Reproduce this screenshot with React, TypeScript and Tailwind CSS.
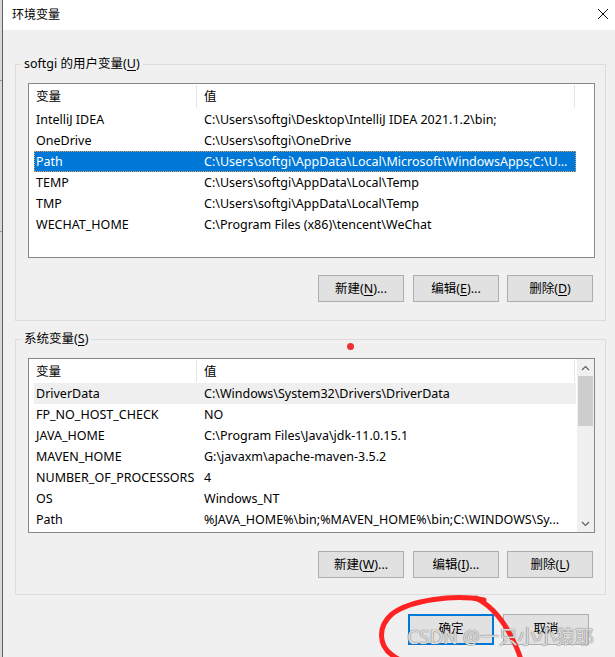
import React from "react";

const FONT = { fontFamily: "'Noto Sans', 'Noto Sans CJK SC', sans-serif" };

type Row = { name: string; value: string };

const userRows: Row[] = [
  { name: "IntelliJ IDEA", value: "C:\\Users\\softgi\\Desktop\\IntelliJ IDEA 2021.1.2\\bin;" },
  { name: "OneDrive", value: "C:\\Users\\softgi\\OneDrive" },
  { name: "Path", value: "C:\\Users\\softgi\\AppData\\Local\\Microsoft\\WindowsApps;C:\\U..." },
  { name: "TEMP", value: "C:\\Users\\softgi\\AppData\\Local\\Temp" },
  { name: "TMP", value: "C:\\Users\\softgi\\AppData\\Local\\Temp" },
  { name: "WECHAT_HOME", value: "C:\\Program Files (x86)\\tencent\\WeChat" },
];

const sysRows: Row[] = [
  { name: "DriverData", value: "C:\\Windows\\System32\\Drivers\\DriverData" },
  { name: "FP_NO_HOST_CHECK", value: "NO" },
  { name: "JAVA_HOME", value: "C:\\Program Files\\Java\\jdk-11.0.15.1" },
  { name: "MAVEN_HOME", value: "G:\\javaxm\\apache-maven-3.5.2" },
  { name: "NUMBER_OF_PROCESSORS", value: "4" },
  { name: "OS", value: "Windows_NT" },
  { name: "Path", value: "%JAVA_HOME%\\bin;%MAVEN_HOME%\\bin;C:\\WINDOWS\\Sy..." },
];

function Btn({ pre, key_, post, className = "" }: { pre: string; key_?: string; post?: string; className?: string }) {
  return (
    <div
      className={`w-[86px] h-[27px] flex items-center justify-center pt-px bg-[#e1e1e1] border border-[#adadad] text-[12.5px] text-black ${className}`}
    >
      <span>
        {pre}
        {key_ !== undefined && (
          <>
            (<span className="underline underline-offset-2">{key_}</span>){post}
          </>
        )}
      </span>
    </div>
  );
}

function Header({ h, full }: { h: string; full: boolean }) {
  return (
    <div className={`flex items-center ${h} bg-white text-[12.5px]`}>
      <div className="w-[168px] ml-[5px] pl-[2px] pt-[2px] relative h-full flex items-center">
        变量
        <div className="absolute right-[5px] top-[1px] bottom-[1px] w-px bg-[#e5e5e5]" />
      </div>
      <div className="w-[373px] pl-[2px] pt-[2px] relative h-full flex items-center">
        值
        <div className="absolute right-0 top-[1px] bottom-[1px] w-px bg-[#e5e5e5]" />
      </div>
      {full && <div className="flex-1" />}
    </div>
  );
}

function ListRow({ r, state }: { r: Row; state?: "sel" | "hover" }) {
  const base = "flex items-center h-[21px] pt-[2px] ml-[5px] w-[542px] text-[12.5px] whitespace-nowrap";
  const cls =
    state === "sel"
      ? "bg-[#0078d7] text-white border border-dotted border-[#e0a060]"
      : state === "hover"
      ? "bg-[#efefef] text-black border border-transparent"
      : "text-black border border-transparent";
  return (
    <div className={`${base} ${cls}`}>
      <div className="w-[167px] pl-[1px] overflow-hidden">{r.name}</div>
      <div className="flex-1 pl-[2px] overflow-hidden">{r.value}</div>
    </div>
  );
}

function GroupLabel({ children }: { children: React.ReactNode }) {
  return (
    <div className="absolute -top-[10px] left-[5px] px-[3px] bg-[#f0f0f0] text-[12.5px] leading-[18px] text-black">
      {children}
    </div>
  );
}

export default function App() {
  return (
    <div className="w-[615px] h-[657px] flex bg-[#f0f0f0] overflow-hidden relative" style={FONT}>
      <div className="w-[2px] h-full bg-[#d8d8d8] flex flex-col">
        <div className="h-[80px]" />
        <div className="h-px bg-[#999]" />
        <div className="h-[150px]" />
        <div className="h-px bg-[#999]" />
      </div>
      <div className="flex-1 flex flex-col border-l border-[#5f5f5f]">
        {/* title bar */}
        <div className="h-[30px] bg-white flex items-center justify-between pl-[9px] pr-[6px]">
          <span className="text-[12px] text-black">环境变量</span>
          <svg width="12" height="12" viewBox="0 0 12 12" className="mt-[-2px]">
            <path d="M1 1 L11 11 M11 1 L1 11" stroke="#111" strokeWidth="1" />
          </svg>
        </div>

        {/* group 1 */}
        <div className="mt-[34px] ml-[12px] w-[591px] h-[257px] border border-[#dcdcdc] relative flex flex-col pt-[18px] pl-[12px]">
          <GroupLabel>
            softgi 的用户变量(<span className="underline underline-offset-2">U</span>)
          </GroupLabel>
          <div className="w-[567px] h-[175px] border border-[#828790] bg-white flex flex-col">
            <Header h="h-[25px]" full />
            {userRows.map((r, i) => (
              <ListRow key={r.name} r={r} state={i === 2 ? "sel" : undefined} />
            ))}
          </div>
          <div className="flex mt-[17px] ml-[290px]">
            <Btn pre="新建" key_="N" post="..." />
            <Btn pre="编辑" key_="E" post="..." className="ml-[9px]" />
            <Btn pre="删除" key_="D" className="ml-[8px]" />
          </div>
        </div>

        {/* group 2 */}
        <div className="mt-[18px] ml-[12px] w-[591px] h-[256px] border border-[#dcdcdc] relative flex flex-col pt-[18px] pl-[12px]">
          <GroupLabel>
            系统变量(<span className="underline underline-offset-2">S</span>)
          </GroupLabel>
          <div className="w-[567px] h-[175px] border border-[#828790] bg-white flex">
            <div className="flex-1 flex flex-col">
              <Header h="h-[24px]" full={false} />
              {sysRows.map((r, i) => (
                <ListRow key={r.name + i} r={r} state={i === 0 ? "hover" : undefined} />
              ))}
            </div>
            <div className="w-[17px] bg-[#f0f0f0] flex flex-col items-center">
              <div className="h-[17px] w-full flex items-center justify-center">
                <svg width="9" height="6" viewBox="0 0 9 6">
                  <path d="M1 5 L4.5 1.5 L8 5" stroke="#606060" strokeWidth="1.2" fill="none" />
                </svg>
              </div>
              <div className="w-[15px] h-[50px] bg-[#cdcdcd]" />
              <div className="flex-1" />
              <div className="h-[17px] w-full flex items-center justify-center">
                <svg width="9" height="6" viewBox="0 0 9 6">
                  <path d="M1 1 L4.5 4.5 L8 1" stroke="#606060" strokeWidth="1.2" fill="none" />
                </svg>
              </div>
            </div>
          </div>
          <div className="flex mt-[18px] ml-[290px]">
            <Btn pre="新建" key_="W" post="..." />
            <Btn pre="编辑" key_="I" post="..." className="ml-[9px]" />
            <Btn pre="删除" key_="L" className="ml-[8px]" />
          </div>
        </div>

        {/* bottom buttons */}
        <div className="flex mt-[19px] ml-[405px]">
          <div className="w-[86px] h-[31px] flex items-center justify-center bg-[#e1e1e1] border-2 border-[#0078d7] text-[12.5px] text-black">
            确定
          </div>
          <div className="w-[86px] h-[31px] ml-[9px] flex items-center justify-center bg-[#e1e1e1] border border-[#adadad] text-[12.5px] text-black">
            取消
          </div>
        </div>
      </div>

      {/* red annotation dot */}
      <div className="absolute left-[347px] top-[343px] w-[7px] h-[7px] rounded-full bg-[#f03030]" />

      {/* red scribble */}
      <svg className="absolute left-0 top-0 pointer-events-none" width="615" height="657" viewBox="0 0 615 657">
        <path
          d="M484 600 C 455 594, 410 600, 392 614 C 378 626, 378 645, 392 655 C 398 660, 405 662, 410 664"
          stroke="#ff2222"
          strokeWidth="5"
          fill="none"
          strokeLinecap="round"
        />
        <path
          d="M476 598 C 492 606, 504 622, 512 638 C 516 646, 519 652, 521 660"
          stroke="#ff2222"
          strokeWidth="5"
          fill="none"
          strokeLinecap="round"
        />
      </svg>

      {/* watermark */}
      <div
        className="absolute left-[407px] top-[624px] text-[19px] leading-[26px] whitespace-nowrap text-[rgba(255,255,255,0.75)] pointer-events-none"
        style={{ textShadow: "0 0 1px #777, 0 0 1px #777" }}
      >
        CSDN @一只小小猿耶
      </div>
    </div>
  );
}
